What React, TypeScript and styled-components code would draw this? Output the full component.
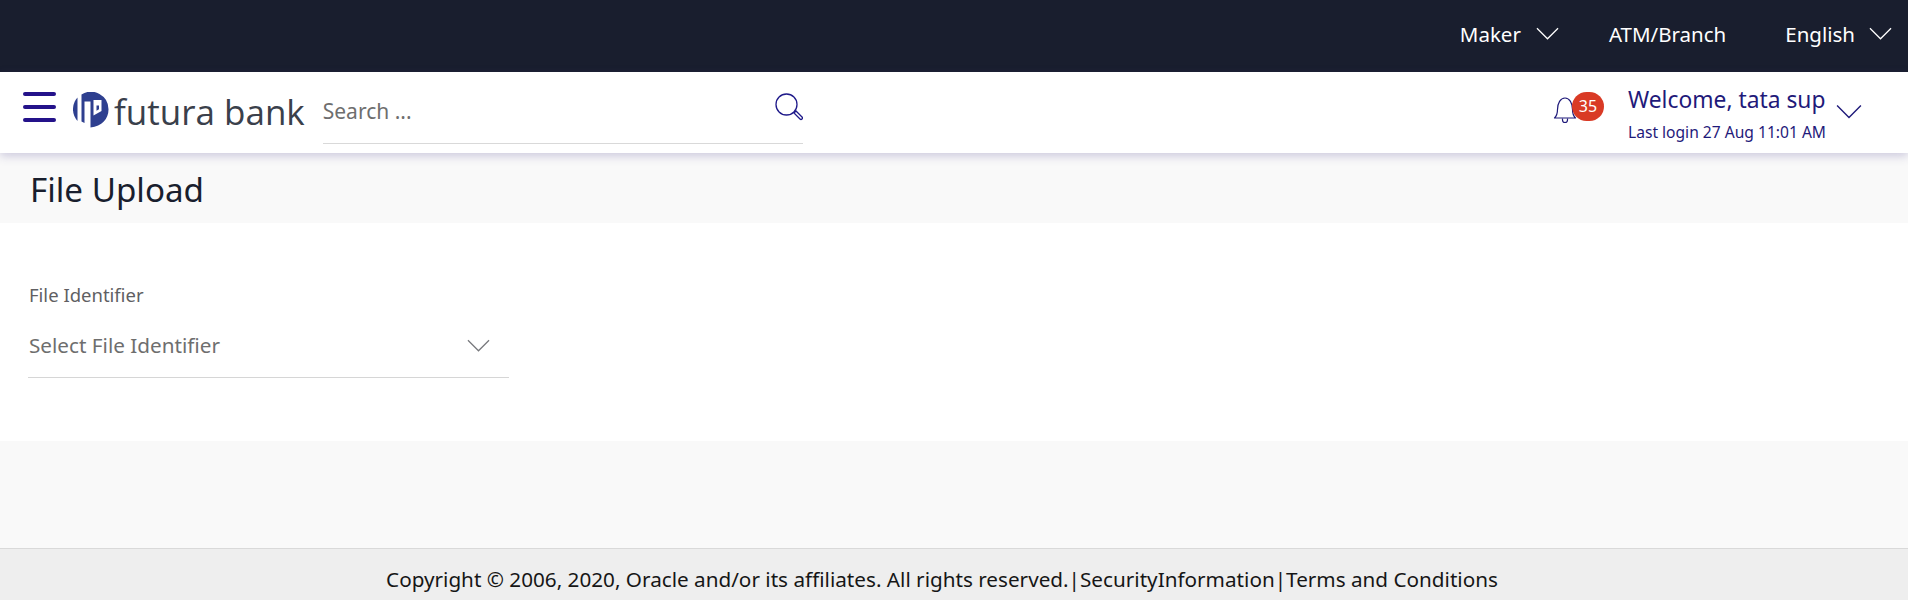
import React from 'react';
import styled, { createGlobalStyle } from 'styled-components';

const GlobalStyle = createGlobalStyle`
  html, body {
    margin: 0;
    padding: 0;
    background: #f9f9f9;
    font-family: "Noto Sans", "Open Sans", sans-serif;
  }
`;

const Chevron: React.FC<{ width: number; height: number; color: string }> = ({ width, height, color }) => (
  <svg width={width} height={height} viewBox="0 0 24 13" fill="none" style={{ flexShrink: 0 }}>
    <path d="M1 1l11 11L23 1" stroke={color} strokeWidth="1.3" />
  </svg>
);

const Logo = () => (
  <svg width="36" height="36" viewBox="0 0 36 36">
    <path d="M4.500 5.500A17.500 17.500 0 0 0 4.500 29Z" fill="#2e3f8f" />
    <path d="M8.500 2.600A17.500 17.500 0 0 1 35.500 17.500C35.500 27 29 34 17.500 35.500V9.500H11.500V31L8.500 29.500Z" fill="#2e3f8f" />
    <path d="M20.500 8h8v11l-8 4.500Z" fill="#fff" />
    <path d="M23.500 13.500h2.500v3.800l-2.500 1.400Z" fill="#2e3f8f" />
  </svg>
);

const Bell = () => (
  <svg width="24" height="28" viewBox="0 0 24 28" fill="none" stroke="#1f1a7a" strokeWidth="1.2">
    <path d="M1.500 22c2.200-2 3-4 3-8.500C4.500 7 7.500 2 12 2s7.500 5 7.500 11.500c0 4.500.8 6.500 3 8.500Z" strokeLinejoin="round" />
    <path d="M9.500 22.500v1.500a2.500 2.500 0 0 0 5 0v-1.500" />
  </svg>
);

const SearchGlyph = () => (
  <svg width="28" height="28" viewBox="0 0 28 28" fill="none" stroke="#1f1a8a" strokeWidth="1.3">
    <circle cx="11.500" cy="11.500" r="10.500" />
    <path d="M19 20l2-2 6 6a1.400 1.400 0 0 1-2 2Z" />
  </svg>
);

export default function App() {
  return (
    <Page>
      <GlobalStyle />
      <TopBar>
        <TopItem $gap={15}>
          Maker
          <Chevron width={23} height={13} color="#ffffff" />
        </TopItem>
        <TopItem $trail={9}>ATM/Branch</TopItem>
        <TopItem $gap={14}>
          English
          <Chevron width={23} height={13} color="#ffffff" />
        </TopItem>
      </TopBar>

      <NavBar>
        <Hamburger>
          <span />
          <span />
          <span />
        </Hamburger>
        <Brand>
          <Logo />
          <BrandName>futura bank</BrandName>
        </Brand>
        <SearchBox>
          <SearchText>Search ...</SearchText>
          <SearchGlyph />
        </SearchBox>
        <UserArea>
          <BellWrap>
            <Bell />
            <Badge>35</Badge>
          </BellWrap>
          <UserInfo>
            <Welcome>Welcome, tata sup</Welcome>
            <LastLogin>Last login 27 Aug 11:01 AM</LastLogin>
          </UserInfo>
          <UserChevron>
            <Chevron width={26} height={15} color="#1f1a7a" />
          </UserChevron>
        </UserArea>
      </NavBar>

      <TitleBand>
        <Title>File Upload</Title>
      </TitleBand>

      <FormPanel>
        <FieldLabel>File Identifier</FieldLabel>
        <Select>
          <SelectText>Select File Identifier</SelectText>
          <Chevron width={23} height={13} color="#77787c" />
        </Select>
      </FormPanel>

      <Spacer />

      <Footer>Copyright © 2006, 2020, Oracle and/or its affiliates. All rights reserved.|SecurityInformation|Terms and Conditions</Footer>
    </Page>
  );
}

const Page = styled.div`
  display: flex;
  flex-direction: column;
  height: 600px;
  overflow: hidden;
`;

const TopBar = styled.div`
  display: flex;
  align-items: center;
  justify-content: flex-end;
  gap: 50px;
  height: 72px;
  padding: 0 16px 5px 0;
  box-sizing: border-box;
  background: #191e2e;
  flex-shrink: 0;
`;

const TopItem = styled.div<{ $gap?: number; $trail?: number }>`
  display: flex;
  align-items: center;
  gap: ${(p) => p.$gap ?? 0}px;
  margin-right: ${(p) => p.$trail ?? 0}px;
  color: #fff;
  font-size: 20.5px;
  line-height: 24px;
`;

const NavBar = styled.div`
  position: relative;
  z-index: 1;
  display: flex;
  align-items: flex-start;
  height: 81px;
  padding-left: 23px;
  background: #fff;
  box-shadow: 0 3px 9px rgba(70, 60, 140, 0.25);
  flex-shrink: 0;
`;

const Hamburger = styled.div`
  display: flex;
  flex-direction: column;
  justify-content: space-between;
  width: 33px;
  height: 30px;
  margin-top: 20px;

  span {
    height: 4px;
    border-radius: 2px;
    background: #24128a;
  }
`;

const Brand = styled.div`
  display: flex;
  align-items: center;
  gap: 5px;
  margin: 20px 0 0 17px;
  height: 36px;
`;

const BrandName = styled.div`
  padding-top: 4px;
  color: #3a404b;
  font-family: "Open Sans", sans-serif;
  font-size: 35px;
  line-height: 36px;
`;

const SearchBox = styled.div`
  display: flex;
  justify-content: space-between;
  width: 480px;
  height: 72px;
  margin-left: 18px;
  padding-top: 21px;
  box-sizing: border-box;
  border-bottom: 1px solid #d9d9d9;
`;

const SearchText = styled.div`
  color: #6e6e6e;
  font-size: 21px;
  line-height: 30px;
  margin-top: 3px;
`;

const UserArea = styled.div`
  display: flex;
  align-items: flex-start;
  margin-left: auto;
  padding-right: 46px;
`;

const BellWrap = styled.div`
  position: relative;
  width: 24px;
  height: 28px;
  margin: 24px 51px 0 0;
`;

const Badge = styled.div`
  position: absolute;
  top: -4px;
  left: 19px;
  width: 32px;
  height: 29px;
  border-radius: 15px;
  background: #d93a25;
  color: #fff;
  font-size: 16px;
  line-height: 29px;
  text-align: center;
`;

const UserInfo = styled.div`
  display: flex;
  flex-direction: column;
  width: 198px;
  margin: 13px 10px 0 0;
  color: #1f1a7a;
  white-space: nowrap;
`;

const Welcome = styled.div`
  font-size: 22.8px;
  line-height: 30px;
`;

const LastLogin = styled.div`
  margin-top: 6px;
  font-size: 15.6px;
  line-height: 22px;
`;

const UserChevron = styled.div`
  margin-top: 30px;
`;

const TitleBand = styled.div`
  height: 70px;
  padding-left: 30px;
  box-sizing: border-box;
  background: #f9f9f9;
  flex-shrink: 0;
`;

const Title = styled.h1`
  margin: 0;
  padding-top: 17px;
  color: #191e2e;
  font-size: 33.2px;
  font-weight: 400;
  line-height: 40px;
`;

const FormPanel = styled.div`
  height: 218px;
  padding: 60px 0 0 28px;
  box-sizing: border-box;
  background: #fff;
  flex-shrink: 0;
`;

const FieldLabel = styled.div`
  padding-left: 1px;
  color: #5f5f63;
  font-size: 18.5px;
  line-height: 24px;
`;

const Select = styled.div`
  display: flex;
  align-items: center;
  justify-content: space-between;
  width: 481px;
  height: 71px;
  padding: 6px 19px 0 1px;
  box-sizing: border-box;
  border-bottom: 1px solid #d6d6d6;
`;

const SelectText = styled.div`
  color: #6e6e6e;
  font-size: 20.7px;
  line-height: 30px;
`;

const Spacer = styled.div`
  height: 107px;
  background: #f9f9f9;
  flex-shrink: 0;
`;

const Footer = styled.div`
  height: 52px;
  padding: 5px 24px 0 0;
  box-sizing: border-box;
  border-top: 1px solid #d9d9d9;
  background: #eeeeee;
  color: #161616;
  font-size: 20.7px;
  line-height: 50px;
  text-align: center;
  white-space: nowrap;
`;
